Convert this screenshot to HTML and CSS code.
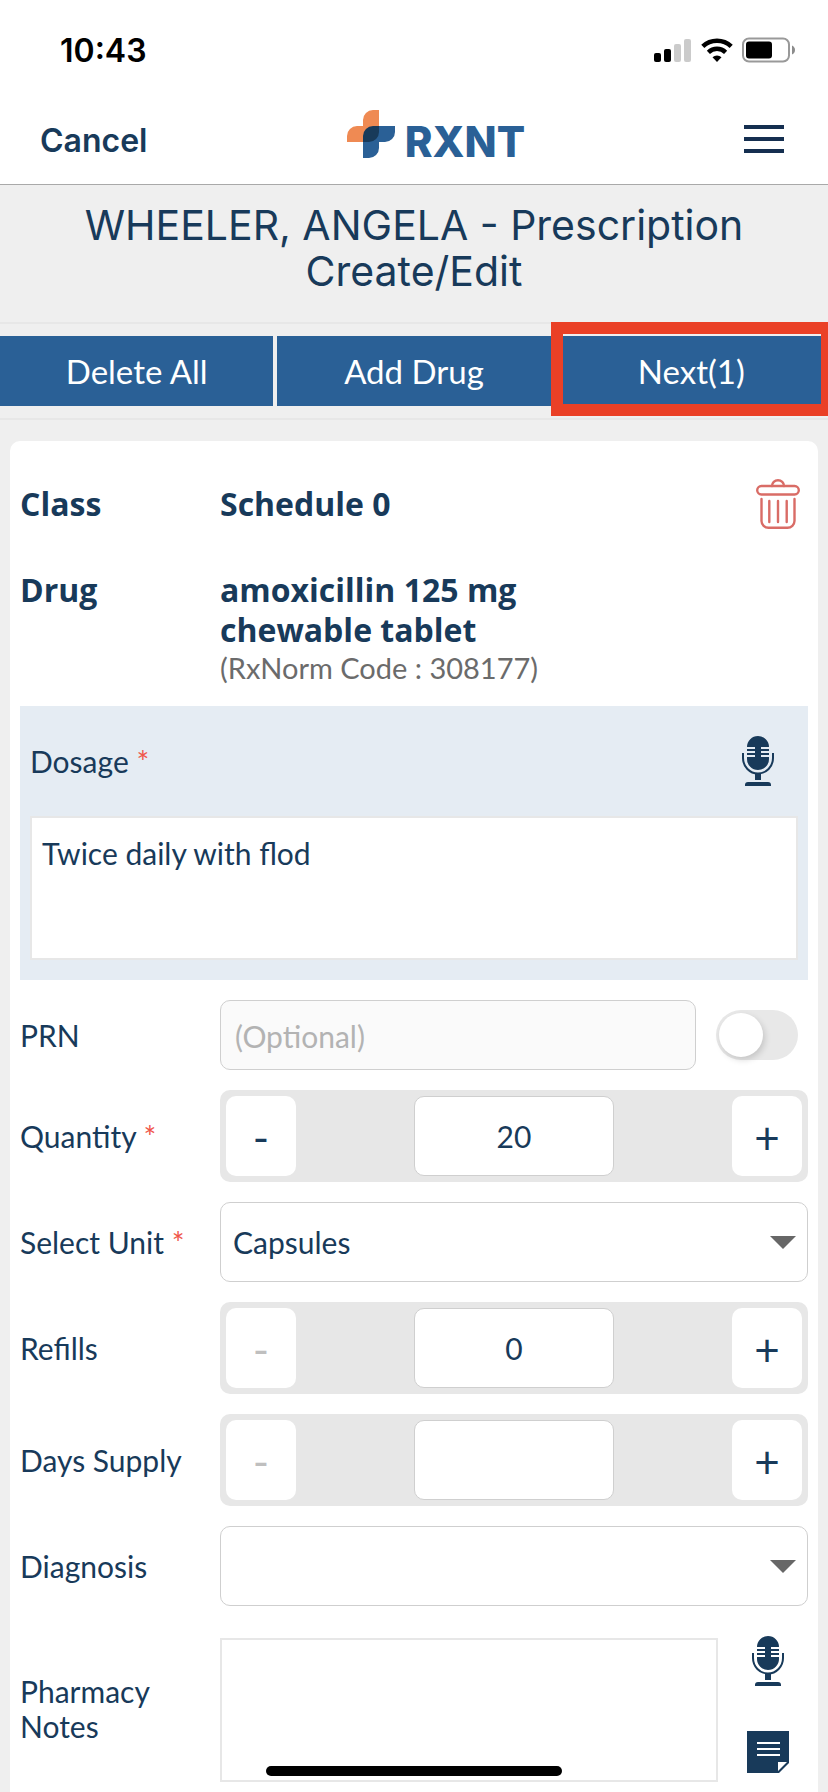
FILE: index.html
```html
<!DOCTYPE html>
<html lang="en">
<head>
<meta charset="utf-8">
<meta name="viewport" content="width=device-width, initial-scale=1">
<title>Prescription Create/Edit</title>
<link rel="stylesheet" href="styles.css">
</head>
<body>
<svg width="0" height="0" class="sprite" aria-hidden="true">
  <symbol id="mic" viewBox="0 0 32 50">
    <path fill="currentColor" d="M5 11a11 11 0 0 1 22 0zM5 21h22v2a11 11 0 0 1-22 0zM13 11h6v10h-6zM5 13h22v2H5zM5 17h22v2H5zM13 37h6v7h-6zM3 50v-1a3 3 0 0 1 3-3h20a3 3 0 0 1 3 3v1z"/>
    <path fill="none" stroke="currentColor" stroke-width="2" d="M1 17v5a15 15.500 0 0 0 30 0v-5"/>
  </symbol>
</svg>
<div class="screen">
  <header class="top">
    <div class="status">
      <span class="clock">10:43</span>
      <div class="signals">
        <svg width="38" height="24" viewBox="0 0 38 24" aria-hidden="true"><rect y="15" width="7" height="9" rx="2"/><rect x="10" y="11" width="7" height="13" rx="2"/><g fill="#cbcbcb"><rect x="20" y="6" width="7" height="18" rx="2"/><rect x="30" y="1" width="7" height="23" rx="2"/></g></svg>
        <svg width="32" height="24" viewBox="0 0 32 24" aria-hidden="true"><g fill="none" stroke="#000" stroke-width="4.500"><path d="M1.800 8.400a20.500 20.500 0 0 1 28.400 0"/><path d="M7.400 14.300a12.500 12.500 0 0 1 17.200 0"/></g><path d="M11.500 19.200a6.500 6.500 0 0 1 9 0L16 24z"/></svg>
        <svg width="54" height="26" viewBox="0 0 54 26" aria-hidden="true"><rect x="1" y="1.500" width="46" height="23" rx="6" fill="none" stroke="#999" stroke-width="2"/><rect x="4" y="4.500" width="26" height="17" rx="3"/><path fill="#8c8c8c" d="M50 8.500q3 1.500 3 4.500t-3 4.500z"/></svg>
      </div>
    </div>
    <nav class="nav">
      <button class="cancel" type="button">Cancel</button>
      <div class="logo">
        <svg width="48" height="48" viewBox="0 0 48 48" aria-hidden="true"><path fill="#ef8a53" d="M16 32H0v-6a10 10 0 0 1 10-10h6v-6A10 10 0 0 1 26 0h6v16L16 32z"/><path fill="#2a6096" d="M32 16h16v6a10 10 0 0 1-10 10h-6v6a10 10 0 0 1-10 10h-6V32z"/><path fill="#183a5a" d="M26 16h6v6a10 10 0 0 1-10 10h-6v-6a10 10 0 0 1 10-10z"/></svg>
        <span class="brand">RXNT</span>
      </div>
      <button class="menu" type="button" aria-label="Menu"><span class="bar"></span><span class="bar"></span><span class="bar"></span></button>
    </nav>
  </header>

  <h1 class="title">WHEELER, ANGELA - Prescription Create/Edit</h1>

  <div class="actions">
    <button class="action" type="button">Delete All</button>
    <button class="action" type="button">Add Drug</button>
    <button class="action marked" type="button">Next(1)</button>
  </div>

  <main class="card">
    <div class="summary">
      <span class="strong">Class</span>
      <span class="strong">Schedule 0</span>
      <button class="icon" type="button" aria-label="Delete">
        <svg width="44" height="50" viewBox="0 0 44 50" fill="none" stroke="#d96c66" stroke-width="2.400" stroke-linecap="round" aria-hidden="true"><rect x="1.200" y="7" width="41.600" height="8.500" rx="4.200"/><path d="M16 7a6 5.800 0 0 1 12 0M5.500 20v22a7 7 0 0 0 7 6.800h19a7 7 0 0 0 7-6.800V20M13.300 22v21M22 22v21M30.700 22v21"/></svg>
      </button>
    </div>
    <div class="summary drug">
      <span class="strong">Drug</span>
      <div>
        <div class="strong">amoxicillin 125 mg chewable tablet</div>
        <div class="code">(RxNorm Code : 308177)</div>
      </div>
    </div>

    <section class="dosage">
      <div class="dosage-head">
        <label for="dosage">Dosage <span class="req">*</span></label>
        <button class="icon" type="button" aria-label="Dictate dosage"><svg width="32" height="50"><use href="#mic"/></svg></button>
      </div>
      <textarea class="area" id="dosage">Twice daily with flod</textarea>
    </section>

    <div class="field">
      <label for="prn">PRN</label>
      <div class="prn">
        <input class="box optional" id="prn" type="text" placeholder="(Optional)">
        <input class="switch" type="checkbox" role="switch" aria-label="PRN enabled">
      </div>
    </div>
    <div class="field">
      <label for="qty">Quantity <span class="req">*</span></label>
      <div class="stepper">
        <button class="step" type="button">-</button>
        <input class="box count" id="qty" type="text" value="20">
        <button class="step" type="button">+</button>
      </div>
    </div>
    <div class="field">
      <label for="unit">Select Unit <span class="req">*</span></label>
      <div class="pick"><select class="box select" id="unit"><option>Capsules</option></select></div>
    </div>
    <div class="field">
      <label for="refills">Refills</label>
      <div class="stepper">
        <button class="step" type="button" disabled>-</button>
        <input class="box count" id="refills" type="text" value="0">
        <button class="step" type="button">+</button>
      </div>
    </div>
    <div class="field">
      <label for="days">Days Supply</label>
      <div class="stepper">
        <button class="step" type="button" disabled>-</button>
        <input class="box count" id="days" type="text">
        <button class="step" type="button">+</button>
      </div>
    </div>
    <div class="field">
      <label for="diag">Diagnosis</label>
      <div class="pick"><select class="box select" id="diag"><option></option></select></div>
    </div>
    <div class="field notes">
      <label for="notes">Pharmacy Notes</label>
      <div class="notes-body">
        <textarea class="area" id="notes"></textarea>
        <div class="tools">
          <button class="icon" type="button" aria-label="Dictate notes"><svg width="32" height="50"><use href="#mic"/></svg></button>
          <button class="icon" type="button" aria-label="Note templates">
            <svg width="42" height="42" viewBox="0 0 42 42" aria-hidden="true"><path fill="#183a5a" d="M0 0h42v32L32 42H0z"/><path fill="#fff" d="M10 11h23v2H10zM10 17h23v2H10zM10 23h23v2H10zM31 31h9l-9 9z"/></svg>
          </button>
        </div>
      </div>
    </div>
  </main>
  <div class="home"></div>
</div>
</body>
</html>
```
FILE: styles.css
```css
* { box-sizing: border-box; }
body {
  margin: 0;
  background: #efefef;
  color: #183a5a;
  font: 30px/35px Lato, "Open Sans", sans-serif;
}
button, input, select, textarea { font: inherit; color: inherit; margin: 0; }
button { border: 0; padding: 0; background: none; }
svg { display: block; }
.sprite { position: absolute; }
.screen { display: flex; flex-direction: column; min-height: 100vh; overflow: hidden; }

.top { background: #fff; border-bottom: 1px solid #a9a9a9; font-family: Inter, sans-serif; }
.status { display: flex; justify-content: space-between; align-items: center; height: 96px; padding: 4px 32px 0 60px; }
.clock { color: #000; font-size: 32px; font-weight: 600; }
.signals { display: flex; align-items: center; gap: 9px; }
.nav { display: grid; grid-template-columns: 1fr auto 1fr; align-items: center; height: 88px; padding: 0 44px 12px 40px; }
.cancel { justify-self: start; font-size: 32px; font-weight: 600; padding-top: 12px; }
.logo { display: flex; gap: 10px; align-items: flex-end; margin-left: 48px; }
.brand { color: #2a6096; font-size: 42px; line-height: 32px; font-weight: 800; }
.menu { justify-self: end; display: grid; gap: 8px; width: 40px; padding-top: 10px; }
.bar { height: 4px; background: #152f50; }

.title { margin: 0; padding: 17px 60px 28px; font: 400 41px/46px Inter, sans-serif; text-align: center; }

.actions { display: grid; grid-template-columns: repeat(3, 1fr); gap: 4px; padding: 12px 0; border: solid #e7e7e7; border-width: 2px 0; }
.action { position: relative; height: 70px; background: #2a6096; color: #fff; font-size: 33px; }
.marked::after { content: ""; position: absolute; inset: -14px -5px -10px -4px; border: 12px solid #ea4026; }

.card { flex: 1; margin: 21px 10px 0; padding: 20px 10px 0; border-radius: 10px 10px 0 0; background: #fff; }
.strong { font: 700 32px/40px "Open Sans", sans-serif; }
.summary { display: grid; grid-template-columns: 200px 1fr auto; align-items: center; height: 86px; padding-right: 8px; }
.drug { grid-template-columns: 200px 400px; align-items: start; height: auto; padding: 23px 0 20px; }
.code { color: #6b6b6b; font-size: 29px; line-height: 36px; }

.dosage { padding: 20px 10px; background: #e5ecf3; }
.dosage-head { display: flex; justify-content: space-between; align-items: center; height: 70px; margin-bottom: 20px; padding-right: 24px; }
.req { color: #f0564a; }
.area { display: block; width: 100%; height: 144px; padding: 18px 10px; border: 2px solid #e7e7e7; background: #fff; resize: none; outline: 0; }

.field { display: grid; grid-template-columns: 200px 1fr; align-items: center; margin-top: 20px; }
.box { border: 1px solid #cfcfcf; border-radius: 10px; background: #fff; outline: 0; }
.prn { display: grid; grid-template-columns: 1fr 82px; gap: 20px; align-items: center; padding-right: 10px; }
.optional { width: 100%; height: 70px; padding: 2px 14px 0; background: #fafafa; }
.optional::placeholder { color: #b3b3b3; opacity: 1; }
.switch { appearance: none; width: 82px; height: 50px; padding: 3px; border-radius: 25px; background: #e8e8e8; }
.switch::before { content: ""; display: block; width: 44px; height: 44px; border-radius: 50%; background: #fff; box-shadow: 2px 3px 6px rgba(0, 0, 0, .15); }
.stepper { display: flex; justify-content: space-between; padding: 6px; border-radius: 10px; background: #e7e7e7; }
.step { width: 70px; height: 80px; padding-top: 2px; border-radius: 10px; background: #fff; font-size: 44px; }
.step:disabled { color: #bfbfbf; }
.count { width: 200px; height: 80px; text-align: center; }
.pick { position: relative; }
.pick::after { content: ""; position: absolute; right: 12px; top: 34px; border: solid transparent; border-width: 13px 13px 0; border-top-color: #676767; pointer-events: none; }
.select { display: block; appearance: none; width: 100%; height: 80px; padding: 0 12px; }
.notes { margin-top: 30px; }
.notes label { padding-right: 40px; }
.notes-body { display: grid; grid-template-columns: 1fr 90px; align-items: end; height: 146px; }
.tools { display: grid; justify-items: center; align-content: space-between; align-self: start; height: 137px; padding-left: 10px; }
.home { position: fixed; left: 50%; bottom: 16px; width: 296px; height: 10px; margin-left: -148px; border-radius: 5px; background: #000; }
```
